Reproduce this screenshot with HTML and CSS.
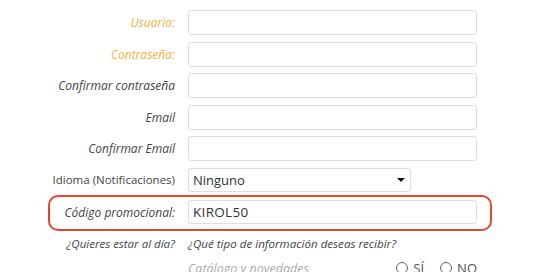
FILE: index.html
```html
<!DOCTYPE html>
<html lang="es">
<head>
    <meta charset="UTF-8">
    <meta name="viewport" content="width=device-width, initial-scale=1.0">
    <title>Registro</title>
    <link rel="stylesheet" href="styles.css">
</head>
<body>

<form class="registro">
    <div class="row">
        <label class="label required">Usuario:</label>
        <input class="field" type="text">
    </div>
    <div class="row">
        <label class="label required">Contraseña:</label>
        <input class="field" type="password">
    </div>
    <div class="row">
        <label class="label">Confirmar contraseña</label>
        <input class="field" type="password">
    </div>
    <div class="row">
        <label class="label">Email</label>
        <input class="field" type="text">
    </div>
    <div class="row">
        <label class="label">Confirmar Email</label>
        <input class="field" type="text">
    </div>
    <div class="row">
        <label class="label plain">Idioma (Notificaciones)</label>
        <div class="select-wrap">
            <select class="field select">
                <option>Ninguno</option>
            </select>
        </div>
    </div>
    <div class="row promo">
        <label class="label">Código promocional:</label>
        <input class="field" type="text" value="KIROL50">
    </div>
    <div class="row news">
        <span class="label">¿Quieres estar al día?</span>
        <span class="question">¿Qué tipo de información deseas recibir?</span>
    </div>
    <div class="row option">
        <span></span>
        <div class="option-line">
            <span class="option-name">Catálogo y novedades</span>
            <span class="radios">
                <span class="radio"><i></i>SÍ</span>
                <span class="radio"><i></i>NO</span>
            </span>
        </div>
    </div>
</form>

</body>
</html>
```

FILE: styles.css
```css
body {
    margin: 0;
    background-color: #fff;
    font-family: "Open Sans", Arial, sans-serif;
    color: #444;
    overflow: hidden;
}
.registro {
    width: 477px;
    padding-top: 10px;
}
.row {
    display: grid;
    grid-template-columns: 175px 289px;
    column-gap: 13px;
    align-items: center;
    margin-bottom: 6.5px;
}
.label {
    text-align: right;
    font-size: 12px;
    font-style: italic;
    white-space: nowrap;
}
.label.required {
    color: #f5b041;
}
.label.plain {
    font-style: normal;
    font-size: 11.5px;
}
.field {
    box-sizing: border-box;
    height: 25px;
    margin: 0;
    padding: 0 4px;
    border: 1px solid #dedede;
    border-radius: 3px;
    background-color: #fff;
    font-family: "Open Sans", Arial, sans-serif;
    font-size: 13px;
    color: #333;
    outline: none;
}
.select-wrap {
    position: relative;
    width: 223px;
}
.select {
    width: 100%;
    height: 24px;
    appearance: none;
    -webkit-appearance: none;
}
.select-wrap::after {
    content: "";
    position: absolute;
    right: 6px;
    top: 10px;
    border-left: 4px solid transparent;
    border-right: 4px solid transparent;
    border-top: 4px solid #111;
}
.promo {
    grid-template-columns: 1fr 289px;
    margin: -3px -15px 0 48px;
    padding: 3px 13px 5px 0;
    border: 2px solid #e8442e;
    border-radius: 10px;
}
.promo .field {
    height: 24px;
    font-size: 13.5px;
    letter-spacing: 0.3px;
}
.news {
    margin-top: 5px;
    margin-bottom: 8px;
}
.news .label {
    font-size: 11.5px;
}
.question {
    font-size: 11.6px;
    font-style: italic;
    white-space: nowrap;
}
.option-line {
    display: flex;
    justify-content: space-between;
    align-items: center;
}
.option-name {
    font-size: 12.5px;
    font-style: italic;
    color: #aaa;
}
.radios {
    display: flex;
    gap: 16px;
}
.radio {
    display: flex;
    align-items: center;
    gap: 5px;
    font-size: 13px;
    color: #555;
}
.radio i {
    width: 10px;
    height: 10px;
    border: 1px solid #666;
    border-radius: 50%;
}
```
